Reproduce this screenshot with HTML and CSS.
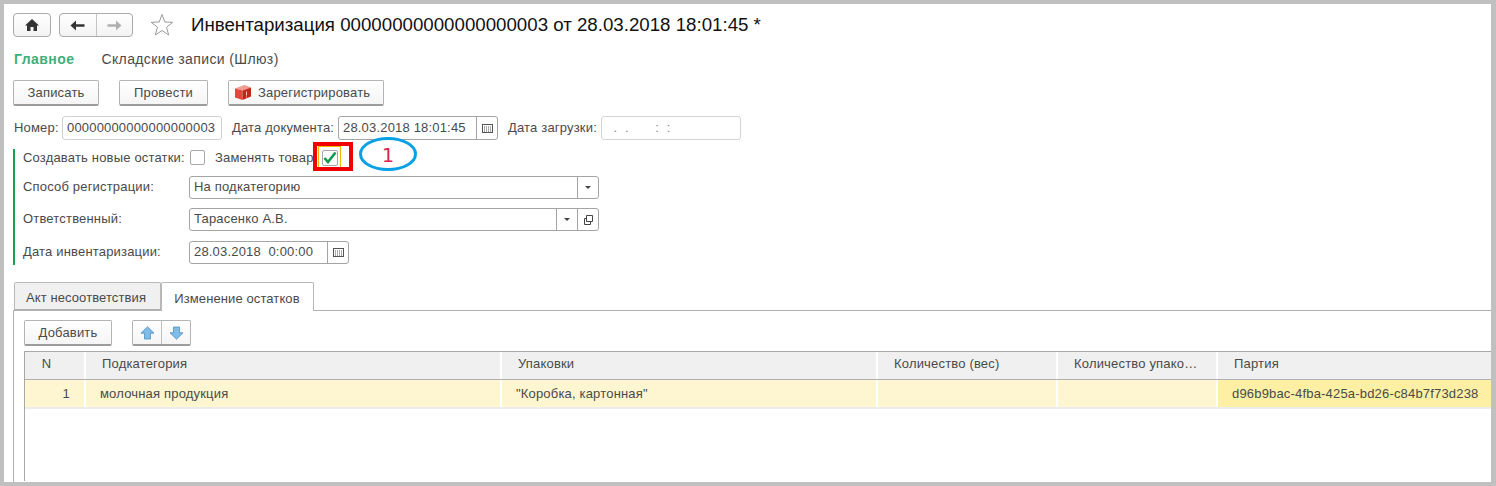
FILE: index.html
```html
<!DOCTYPE html>
<html lang="ru">
<head>
<meta charset="utf-8">
<title>Инвентаризация</title>
<link rel="stylesheet" href="styles.css">
</head>
<body>
<div class="frame">
  <header class="topbar">
    <button class="tool home" aria-label="Домой"><svg width="16" height="14" viewBox="0 0 16 14"><path d="M8 1 L15 7.5 H13 V13 H9.5 V9 H6.5 V13 H3 V7.5 H1 Z" fill="#333"/></svg></button>
    <div class="tool nav">
      <span class="nav-cell"><svg width="15" height="11" viewBox="0 0 15 11"><path d="M0.5 5.5 L6 0.5 V4.2 H14.5 V6.8 H6 V10.5 Z" fill="#333"/></svg></span>
      <span class="nav-cell"><svg width="15" height="11" viewBox="0 0 15 11"><path d="M14.5 5.5 L9 0.5 V4.2 H0.5 V6.8 H9 V10.5 Z" fill="#b0b0b0"/></svg></span>
    </div>
    <svg class="star" width="24" height="24" viewBox="0 0 24 24"><path d="M12 1.5 L14.8 9 L22.8 9.3 L16.5 14.2 L18.7 22 L12 17.5 L5.3 22 L7.5 14.2 L1.2 9.3 L9.2 9 Z" fill="none" stroke="#9a9a9a" stroke-width="1"/></svg>
    <h1 class="title">Инвентаризация 00000000000000000003 от 28.03.2018 18:01:45 *</h1>
  </header>

  <nav class="sections">
    <a class="section active">Главное</a>
    <a class="section">Складские записи (Шлюз)</a>
  </nav>

  <div class="commands">
    <button class="btn w-write">Записать</button>
    <button class="btn w-post">Провести</button>
    <button class="btn w-reg"><svg width="18" height="17" viewBox="0 0 18 17"><path d="M1 4.5 L10.5 1 L17 3.5 L8.5 6.5 Z" fill="#ee9c90"/><path d="M1 4.5 L8.5 6.5 V16 L1 13.5 Z" fill="#e4473c"/><path d="M8.5 6.5 L17 3.5 V12.5 L8.5 16 Z" fill="#c0261c"/><path d="M12.5 7.5 V11.5 M12.5 12.5 V13.5" stroke="#f6d0c8" stroke-width="1"/></svg>Зарегистрировать</button>
  </div>

  <div class="docrow">
    <label class="lbl lbl-num">Номер:</label>
    <div class="input w-num">00000000000000000003</div>
    <label class="lbl lbl-date">Дата документа:</label>
    <div class="input w-date"><span class="val">28.03.2018 18:01:45</span><span class="addon cal"><svg class="calico" viewBox="0 0 11 9"><use href="#cal"/></svg></span></div>
    <label class="lbl lbl-load">Дата загрузки:</label>
    <div class="input w-load disabled">&nbsp;&nbsp;.&nbsp;&nbsp;.&nbsp;&nbsp;&nbsp;&nbsp;&nbsp;&nbsp;&nbsp;:&nbsp;&nbsp;:</div>
  </div>

  <section class="group">
    <div class="chk-row">
      <span class="lbl lbl-create">Создавать новые остатки:</span>
      <span class="check"></span>
      <span class="lbl lbl-replace">Заменять товар</span>
      <span class="check checked"><svg width="14" height="13" viewBox="0 0 14 13"><path d="M1.5 7 L5 11 L12.5 1.5" fill="none" stroke="#0f9b4d" stroke-width="2.6"/></svg></span>
    </div>
    <div class="frow r-method">
      <span class="lbl flabel">Способ регистрации:</span>
      <div class="input w-method"><span class="val">На подкатегорию</span><span class="addon"><i class="caret"></i></span></div>
    </div>
    <div class="frow r-resp">
      <span class="lbl flabel">Ответственный:</span>
      <div class="input w-method"><span class="val">Тарасенко А.В.</span><span class="addon"><i class="caret"></i></span><span class="addon"><svg width="11" height="11" viewBox="0 0 11 11"><path d="M3.5 1.5 H9.5 V7.5 H3.5 Z" fill="none" stroke="#444"/><path d="M3 4.5 H1.5 V10.5 H7.5 V8" fill="none" stroke="#444"/></svg></span></div>
    </div>
    <div class="frow r-idate">
      <span class="lbl flabel">Дата инвентаризации:</span>
      <div class="input w-idate"><span class="val">28.03.2018&nbsp; 0:00:00</span><span class="addon cal"><svg class="calico" viewBox="0 0 11 9"><use href="#cal"/></svg></span></div>
    </div>
  </section>

  <div class="tabs">
    <div class="tab t1">Акт несоответствия</div>
    <div class="tab t2">Изменение остатков</div>
  </div>
  <div class="panel">
    <div class="paneltools">
      <button class="btn w-add">Добавить</button>
      <div class="arrows">
        <span class="arrow"><svg width="15" height="14" viewBox="0 0 15 14"><path d="M7.5 0.8 L14 7.2 H10.5 V13 H4.5 V7.2 H1 Z" fill="#7fbde8" stroke="#4d8fc4" stroke-width=".8"/></svg></span>
        <span class="arrow"><svg width="15" height="14" viewBox="0 0 15 14"><path d="M7.5 13.2 L14 6.8 H10.5 V1 H4.5 V6.8 H1 Z" fill="#7fbde8" stroke="#4d8fc4" stroke-width=".8"/></svg></span>
      </div>
    </div>
    <div class="grid">
      <div class="grow head">
        <div class="cell c-n center">N</div>
        <div class="cell c-cat">Подкатегория</div>
        <div class="cell c-pack">Упаковки</div>
        <div class="cell c-qty">Количество (вес)</div>
        <div class="cell c-qp">Количество упако…</div>
        <div class="cell c-lot">Партия</div>
      </div>
      <div class="grow data">
        <div class="cell c-n right">1</div>
        <div class="cell c-cat">молочная продукция</div>
        <div class="cell c-pack">"Коробка, картонная"</div>
        <div class="cell c-qty"></div>
        <div class="cell c-qp"></div>
        <div class="cell c-lot current">d96b9bac-4fba-425a-bd26-c84b7f73d238</div>
      </div>
    </div>
  </div>

  <div class="mark-yellow"></div>
  <div class="mark-red"></div>
  <svg class="mark-ellipse" width="60" height="40" viewBox="0 0 60 40"><ellipse cx="30" cy="19" rx="27.5" ry="15.5" fill="none" stroke="#0aa0e6" stroke-width="3"/></svg>
  <span class="mark-num">1</span>
</div>
<svg width="0" height="0" class="defs"><defs><g id="cal"><rect x=".5" y=".5" width="10" height="8" fill="#fff" stroke="#555"/><path d="M2 3 H9 M2 5 H9 M2 7 H9" stroke="#555" stroke-dasharray="1 1"/></g></defs></svg>
</body>
</html>
```
FILE: styles.css
```css
* { box-sizing: border-box; }
html, body { margin: 0; padding: 0; background: #fff; }
body { width: 1496px; height: 486px; overflow: hidden; }
.defs { position: absolute; }
.frame {
  position: relative; width: 1496px; height: 486px; overflow: hidden;
  border: solid #c0c0c0; border-width: 4px 5px 4px 4px;
  font: 13px/16px "Liberation Sans", Arial, sans-serif; color: #4a4a4a; letter-spacing: .18px;
  padding: 9px 0 0 9px; background: #fff;
}
button { font: inherit; color: inherit; letter-spacing: inherit; padding: 0; margin: 0; }

.topbar { display: flex; align-items: center; height: 24px; }
.tool {
  height: 24px; border: 1px solid #aaa; border-radius: 4px; background: linear-gradient(#fff, #f3f3f3);
  display: flex; align-items: center; justify-content: center;
}
.home { width: 38px; }
.nav { width: 74px; margin-left: 8px; }
.nav-cell { flex: 1; height: 100%; display: flex; align-items: center; justify-content: center; }
.nav-cell + .nav-cell { border-left: 1px solid #c4c4c4; }
.star { margin-left: 17px; }
.title { margin: 0 0 0 17px; font-size: 18.7px; font-weight: 400; color: #111; letter-spacing: 0; line-height: 24px; white-space: nowrap; }

.sections { display: flex; height: 20px; margin-top: 12px; line-height: 20px; margin-left: 1px; font-size: 14px; letter-spacing: .37px; }
.section { margin-right: 27px; }
.section.active { color: #3fae78; font-weight: 700; letter-spacing: .45px; }

.commands { display: flex; margin-top: 11px; height: 26px; }
.btn {
  height: 26px; border: 1px solid #b4b4b4; border-bottom: 2px solid #9c9c9c; border-radius: 2px; background: linear-gradient(#fff, #f5f5f5);
  display: flex; align-items: center; justify-content: center; white-space: nowrap;
}
.w-write { width: 86px; }
.w-post { width: 89px; margin-left: 20px; }
.w-reg { width: 156px; margin-left: 20px; gap: 6px; justify-content: flex-start; padding-left: 5px; }

.docrow { display: flex; align-items: center; height: 24px; margin-top: 10px; margin-left: 1px; white-space: nowrap; }
.lbl { white-space: nowrap; }
.input {
  height: 24px; border: 1px solid #a4a4a4; border-radius: 3px; background: #fff; display: flex; align-items: center; padding-left: 4px; white-space: nowrap;
}
.val { flex: 1; min-width: 0; overflow: hidden; }
.addon { width: 21px; height: 100%; border-left: 1px solid #a4a4a4; display: flex; align-items: center; justify-content: center; flex: none; }
.calico { width: 11px; height: 9px; }
.caret { width: 0; height: 0; border: 3px solid transparent; border-top: 3px solid #444; border-bottom: 0; }
.lbl-num { width: 48px; }
.w-num { width: 160px; border-color: #d0d0d0; }
.lbl-date { margin-left: 10px; width: 106px; }
.w-date { width: 160px; }
.lbl-load { margin-left: 10px; width: 93px; }
.w-load { width: 140px; }
.disabled { border-color: #d4d4d4; color: #888; }

.group { margin: 9px 0 0 0; width: 600px; height: 116px; border-left: 2px solid #14a04f; padding-left: 8px; }
.chk-row { display: flex; align-items: center; height: 17px; }
.check { width: 15px; height: 15px; border: 1px solid #a8a8a8; border-radius: 2px; display: flex; align-items: center; justify-content: center; flex: none; }
.check svg { flex: none; }
.lbl-create { width: 167px; }
.lbl-replace { margin-left: 10px; width: 107px; }
.checked { width: 16px; height: 16px; }
.frow { display: flex; align-items: center; height: 23px; }
.input.w-method, .input.w-idate { height: 23px; }
.input.w-method .val, .input.w-idate .val { position: relative; top: -1px; }
.flabel { width: 166px; position: relative; top: -1px; }
.w-method { width: 410px; }
.w-idate { width: 160px; }
.r-method { margin-top: 10px; }
.r-resp { margin-top: 9px; }
.r-idate { margin-top: 10px; }

.tabs { display: flex; margin-top: 17px; height: 28px; margin-left: 1px; }
.tab { border: 1px solid #b8b8b8; border-bottom: 0; display: flex; align-items: center; justify-content: center; white-space: nowrap; border-radius: 2px 2px 0 0; padding-top: 3px; letter-spacing: .1px; }
.t1 { width: 147px; background: #f0f0f0; height: 28px; margin-top: 0; border-bottom: 1px solid #b0b0b0; padding-right: 3px; }
.t2 { width: 153px; height: 29px; background: #fff; position: relative; z-index: 1; padding-right: 1px; }
.panel { border-top: 1px solid #b0b0b0; border-left: 1px solid #b0b0b0; height: 172px; padding: 9px 0 0 10px; overflow: hidden; }
.paneltools { display: flex; height: 26px; }
.w-add { width: 88px; }
.arrows { display: flex; margin-left: 20px; height: 26px; width: 59px; border: 1px solid #b4b4b4; border-bottom: 2px solid #9c9c9c; border-radius: 2px; background: linear-gradient(#fff, #f5f5f5); }
.arrow { flex: 1; display: flex; align-items: center; justify-content: center; }
.arrow + .arrow { border-left: 1px solid #c0c0c0; }
.grid { margin-top: 5px; border-top: 1px solid #a8a8a8; border-left: 1px solid #a8a8a8; height: 130px; }
.grow { display: flex; white-space: nowrap; }
.head { height: 28px; background: #f0f0f0; border-bottom: 1px solid #b0b0b0; }
.data { height: 29px; background: #fdf6d0; border-bottom: 2px solid #ececec; }
.cell { height: 100%; display: flex; align-items: center; border-right: 2px solid #fff; padding-left: 14px; flex: none; overflow: hidden; }
.head .cell { padding: 0 0 3px 16px; }
.head .center { justify-content: center; padding: 0 16px 3px 0; }
.right { justify-content: flex-end; padding: 0 14px 0 0; }
.c-n { width: 61px; }
.c-cat { width: 416px; }
.c-pack { width: 376px; }
.c-qty { width: 180px; }
.c-qp { width: 160px; }
.c-lot { width: 275px; border-right: 0; }
.current { background: #fdf0a4; padding-left: 14px; }

.mark-red { position: absolute; left: 309px; top: 138px; width: 40px; height: 29px; border: 4px solid #f00000; }
.mark-yellow { position: absolute; left: 314px; top: 142px; width: 23px; height: 23px; border: 1px solid #f2b800; }
.mark-ellipse { position: absolute; left: 354px; top: 131px; }
.mark-num { position: absolute; left: 378px; top: 140px; font-size: 19px; line-height: 22px; color: #e0204f; letter-spacing: 0; font-family: "DejaVu Sans", sans-serif; }
```
